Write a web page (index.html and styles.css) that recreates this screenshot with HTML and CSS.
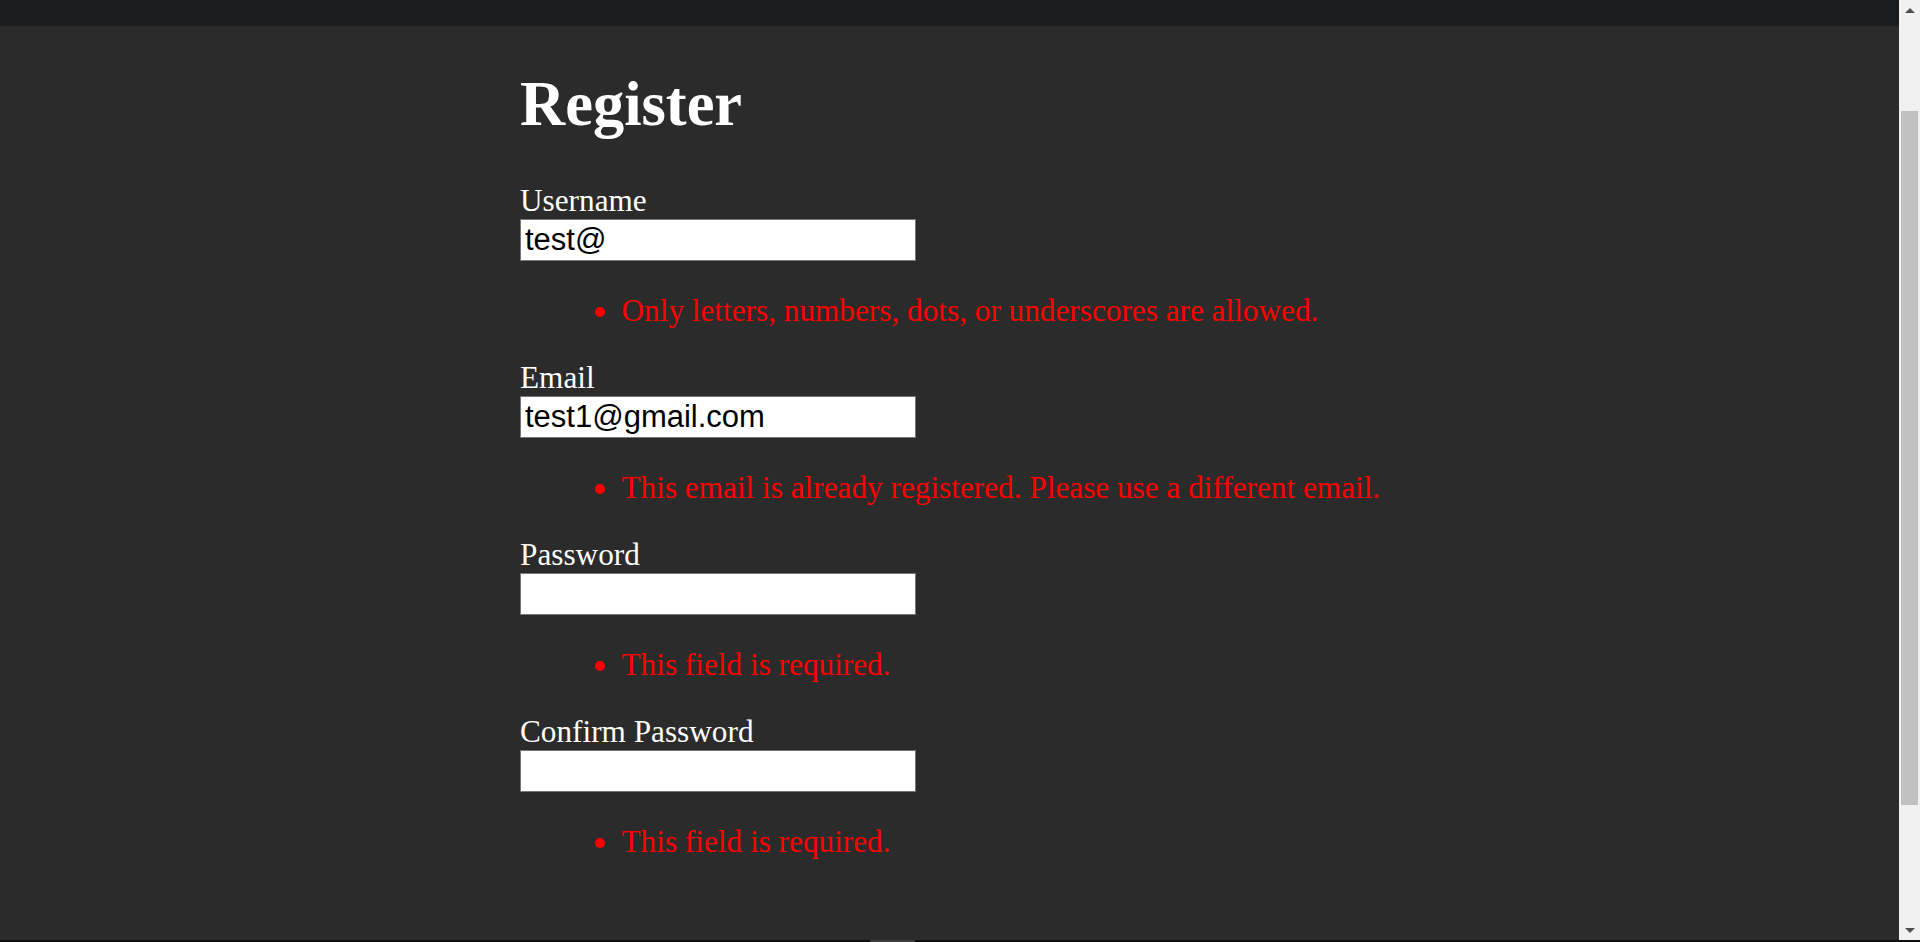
FILE: index.html
```html
<!DOCTYPE html>
<html lang="en">
<head>
<meta charset="utf-8">
<title>Register</title>
<link rel="stylesheet" href="styles.css">
</head>
<body>
<div class="page">
  <div class="row">
    <div class="main">
      <header class="topbar"></header>
      <main class="content">
        <h1 class="title">Register</h1>
        <form class="form">
          <div class="field">
            <label class="label" for="username">Username</label>
            <input class="input" id="username" type="text" value="test@">
            <ul class="errors"><li class="error">Only letters, numbers, dots, or underscores are allowed.</li></ul>
          </div>
          <div class="field">
            <label class="label" for="email">Email</label>
            <input class="input" id="email" type="text" value="test1@gmail.com">
            <ul class="errors"><li class="error">This email is already registered. Please use a different email.</li></ul>
          </div>
          <div class="field">
            <label class="label" for="password">Password</label>
            <input class="input" id="password" type="password" value="">
            <ul class="errors"><li class="error">This field is required.</li></ul>
          </div>
          <div class="field">
            <label class="label" for="confirm">Confirm Password</label>
            <input class="input" id="confirm" type="password" value="">
            <ul class="errors"><li class="error">This field is required.</li></ul>
          </div>
        </form>
      </main>
    </div>
    <div class="scrollbar">
      <div class="arrow arrow-up"></div>
      <div class="track"><div class="thumb"></div></div>
      <div class="arrow arrow-down"></div>
    </div>
  </div>
  <div class="bottom-edge"><span class="edge-tab"></span></div>
</div>
</body>
</html>
```

FILE: styles.css
```css
html, body {
  margin: 0;
  padding: 0;
  height: 100%;
  overflow: hidden;
  background: #2b2b2b;
}

.page {
  display: flex;
  flex-direction: column;
  width: 1920px;
  height: 942px;
}

.row {
  display: flex;
  flex: 1;
  min-height: 0;
}

.main {
  flex: 1;
  display: flex;
  flex-direction: column;
  background: #2b2b2b;
}

.topbar {
  height: 26px;
  background: #1c1d1f;
  flex: none;
}

.content {
  padding-left: 520px;
  font-family: "Liberation Serif", "Times New Roman", serif;
  color: #ffffff;
}

.title {
  margin: 44px 0 0;
  font-size: 62.5px;
  line-height: 69px;
  font-weight: bold;
  color: #ffffff;
}

.form {
  margin: 44px 0 0;
}

.field {
  display: flex;
  flex-direction: column;
  align-items: flex-start;
}

.label {
  display: block;
  font-size: 31.25px;
  line-height: 35px;
  color: #ffffff;
}

.input {
  display: block;
  box-sizing: border-box;
  width: 396px;
  height: 42px;
  margin: 1px 0 0;
  padding: 0 4px;
  border: 1px solid #767676;
  border-radius: 0;
  background: #ffffff;
  color: #000000;
  font-family: "Liberation Sans", Arial, sans-serif;
  font-size: 31px;
  outline: none;
}

.errors {
  list-style: none;
  margin: 31.5px 0 32.5px;
  padding: 0 0 0 75px;
}

.error {
  display: flex;
  font-size: 31.25px;
  line-height: 35px;
  color: #ff0000;
  white-space: nowrap;
}

.error::before {
  content: "";
  flex: none;
  width: 9.5px;
  height: 9.5px;
  margin: 14.5px 17px 0 0;
  border-radius: 50%;
  background: #ff0000;
}

.scrollbar {
  width: 21px;
  flex: none;
  display: flex;
  flex-direction: column;
  align-items: center;
  background: #f1f1f1;
}

.arrow {
  width: 0;
  height: 0;
  flex: none;
  border-left: 5px solid transparent;
  border-right: 5px solid transparent;
}

.arrow-up {
  margin-top: 8px;
  border-bottom: 5px solid #505050;
}

.arrow-down {
  margin-bottom: 7px;
  border-top: 5px solid #505050;
}

.track {
  flex: 1;
  align-self: stretch;
  display: flex;
  flex-direction: column;
  padding: 0 2px;
}

.thumb {
  margin-top: 98px;
  height: 694px;
  background: #c1c1c1;
}

.bottom-edge {
  height: 2px;
  flex: none;
  background: #0e0e0e;
  padding-left: 870px;
}

.edge-tab {
  display: block;
  width: 45px;
  height: 2px;
  background: #3c3c3c;
}
```
